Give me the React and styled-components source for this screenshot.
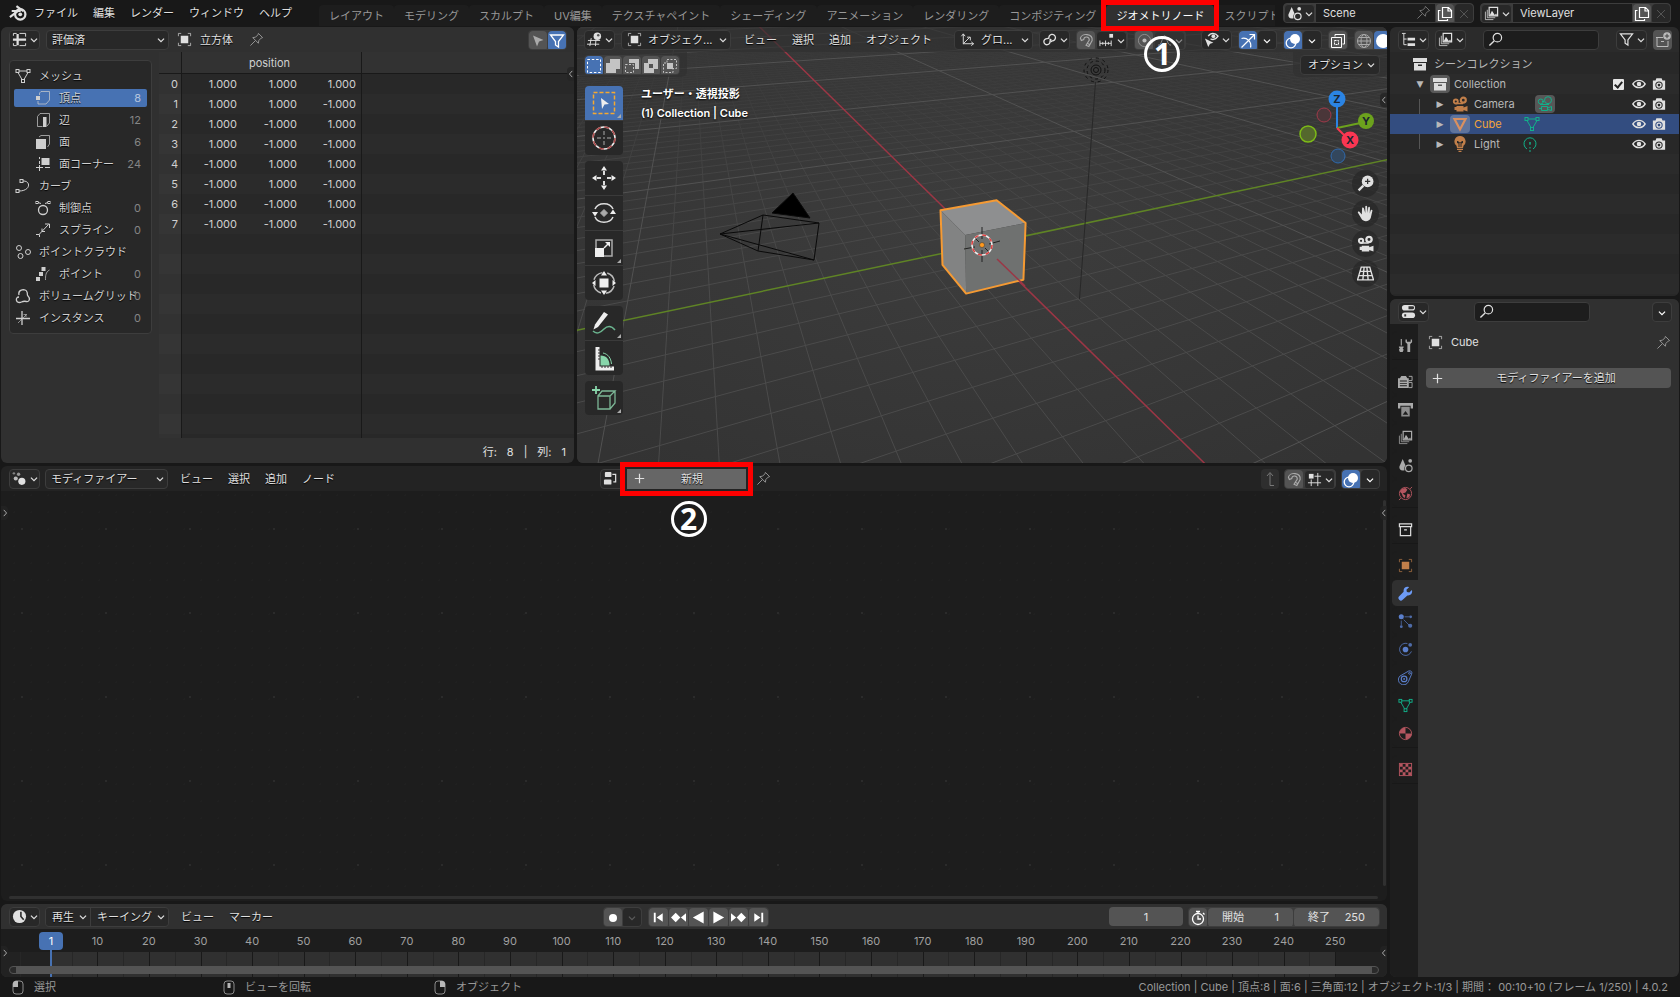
import { useState } from "react";
import styled, { createGlobalStyle, css } from "styled-components";

/* ---------- icons, all drawn on a 16 x 16 grid ---------- */

const square = (x, y, s = 3) => <rect x={x} y={y} width={s} height={s} />;

const icons = {
  blender: (
    <>
      <circle cx="10" cy="9.2" r="4.6" strokeWidth="2" />
      <circle cx="10" cy="9.2" r="1.7" fill="currentColor" stroke="none" />
      <path d="M0.8 11.6 8.6 5.6M2.4 6.2h8M6.6 1.8l6.2 4.6" strokeWidth="1.9" />
    </>
  ),
  chevron: <path d="M4.5 6.5 8 10l3.5-3.5" strokeWidth="1.4" />,
  left: <path d="M10 3 5.500 8l4.500 5" strokeWidth="1.5" />,
  right: <path d="M6 3l4.500 5L6 13" strokeWidth="1.5" />,
  sheet: (
    <>
      <path d="M1.5 4V1.5H5M8 1.5h6.5V5M1.5 12v2.5H5M8 14.5h6.5V12" strokeWidth="1" />
      <path d="M1 8h14M6 2v12" strokeWidth="2.4" />
    </>
  ),
  object: (
    <>
      <path d="M1.5 4.5v-3h3M11.5 1.5h3v3M1.5 11.5v3h3M11.5 14.5h3v-3" opacity=".7" />
      <rect x="4" y="4" width="8" height="8" fill="currentColor" stroke="none" />
    </>
  ),
  pin: <path d="M10 1.5 14.5 6l-1.5.5-2.5 2.5-.5 3L4 6l3-.5L9.5 3zM6.8 9.2 1.5 14.5" />,
  cursorArrow: <path d="M3 2.5 13.5 7 9 8.5 7 13.5z" fill="currentColor" stroke="none" />,
  funnel: <path d="M1.5 2h13L9.5 8.5v5.5l-3-2V8.5z" strokeWidth="1.3" />,
  mesh: (
    <>
      {square(1, 1.5)}
      {square(12, 1.5)}
      {square(6.5, 11.5)}
      <path d="M4 3h8M3 4.5l4 7M13 4.5l-4 7" />
    </>
  ),
  vertex: (
    <>
      <path d="M4.5 5V3L6 1.5h8.5V10l-3.5 4H3v-3" opacity=".7" />
      <rect x="1" y="6" width="4" height="4" fill="currentColor" stroke="none" />
    </>
  ),
  edge: (
    <>
      <path d="M2.5 14.5h5M2.5 14.5V4.5L5 1.5h9.5V11L12 14" opacity=".7" />
      <rect x="8" y="5" width="3.5" height="10" fill="currentColor" stroke="none" />
    </>
  ),
  face: (
    <>
      <path d="M4 3 6 1.5h8.5V10L12.5 13" opacity=".7" />
      <rect x="1" y="5" width="10" height="10" fill="currentColor" stroke="none" />
    </>
  ),
  corner: (
    <>
      <path d="M6.5 2h8v7h-8z" fill="currentColor" stroke="none" />
      <path d="M4.5 1v2M4.5 5v3M4.5 9v6M1 11.5h7M10 11.5h5" />
    </>
  ),
  curve: (
    <>
      {square(5, 1.5)}
      {square(1, 11.5)}
      <path d="M8 3c8-.5 8 10-4 10" />
    </>
  ),
  control: (
    <>
      <circle cx="8" cy="10" r="4.5" strokeWidth="1.3" />
      <path d="M3 2.5 6 3.500M13 2.500 10 3.500" />
      {square(1, 1.5, 2)}
      {square(13, 1.5, 2)}
    </>
  ),
  spline: <path d="M1 12.5h3.5V15M4.5 12l9-9.500M10 2h4.500v4M7 6.500v3h3" />,
  cloud: (
    <>
      <circle cx="4" cy="4" r="2.5" />
      <circle cx="5.5" cy="12" r="2.5" />
      <circle cx="13" cy="8" r="2.5" />
    </>
  ),
  points: (
    <>
      <path d="M14.5 4c-4 2-4 6-4 10" opacity=".7" />
      <path d="M1 11h4v4H1zM4 6h4v4H4zM6.5 1h4v4h-4z" fill="currentColor" stroke="none" />
    </>
  ),
  volume: <path d="M4 7C2.5 1.5 11 0 12 4c1 2-.5 2.5 1 4 2.5 2.5 1.5 6-1.5 5.5-2-.5-3-.5-5 .5-2 1-4.5.5-5-1.5S2 9 4 9" strokeWidth="1.3" />,
  instance: (
    <>
      <path d="M7 1v14M1 8.500h14" strokeWidth="1.300" />
      <path d="M3 13l9-9M11 7V4.500H8.500" opacity=".6" />
    </>
  ),
  nodes: (
    <>
      <circle cx="10.5" cy="11" r="3.8" fill="currentColor" stroke="none" />
      <circle cx="4" cy="8" r="2.2" fill="currentColor" stroke="none" opacity=".8" />
      <circle cx="7" cy="3.5" r="1.8" fill="currentColor" stroke="none" opacity=".6" />
      <circle cx="2" cy="2.5" r="1.3" fill="currentColor" stroke="none" opacity=".5" />
    </>
  ),
  view3d: (
    <>
      <path d="M4.5 6.5 3 15M9.5 8.5 9 15M1 9h13M0 13h13" />
      <circle cx="11" cy="4.5" r="4" fill="currentColor" stroke="none" />
      <circle cx="12" cy="3.5" r="1.3" fill="#555" stroke="none" />
    </>
  ),
  axes: <path d="M3.5 13V2M1.5 4.500 3.500 2l2 2.500M3.500 12.500h11M12 10.500l2.500 2-2.500 2M4 12l6.500-6.500M7.500 5.500H11V9" />,
  link: (
    <>
      <path d="M8.5 9.5a3.3 3.3 0 1 1-3-2.5l2-.5" strokeWidth="1.4" />
      <path d="M7.5 7a3.5 3.5 0 1 1 3.5 2.5l-2 1" strokeWidth="1.4" />
      <circle cx="9" cy="8.5" r="1.2" fill="currentColor" stroke="none" />
    </>
  ),
  magnet: <path d="M2.500 8 1.500 5.500C3-.5 15 .5 14 8l-3.500 6.500-3-1.500L11 7.500C11 3.500 5.500 3 5 7zM8.800 11l3 1.500" strokeWidth="1.200" />,
  snapInc: (
    <>
      <path d="M1 8v6M4 9.5v3M7 8v6M10 9.5v3M13 8v6M1 11h12" />
      <rect x="11" y="1" width="4" height="4" fill="currentColor" stroke="none" />
    </>
  ),
  snapGrid: (
    <>
      <path d="M4.5 8v7M11.5 1v14M8 4.5h7M1 11.5h14" />
      <rect x="2" y="2" width="5" height="5" fill="currentColor" stroke="none" />
    </>
  ),
  proportional: (
    <>
      <circle cx="8" cy="8" r="6.5" opacity=".6" />
      <circle cx="8" cy="8" r="2.2" fill="currentColor" stroke="none" />
    </>
  ),
  falloff: <path d="M1 13c5 0 4-10 7-10s2 10 7 10" />,
  visibility: (
    <>
      <path d="M1 7 10 11.500 6.500 12.500 4.500 16z" fill="currentColor" stroke="none" />
      <path d="M4.500 4.500C7 .5 12 .5 15 4.500c-2.500 3.500-5.500 4-8 2.800" strokeWidth="1.400" />
      <circle cx="10" cy="4.500" r="2" fill="currentColor" stroke="none" />
    </>
  ),
  gizmo: <path d="M1.5 5.5C7 4 12 9 10.5 14.5M1.5 14.5 14 2M9.5 1.5h5v5" strokeWidth="1.2" />,
  overlay: (
    <>
      <circle cx="10" cy="6" r="5" fill="currentColor" stroke="none" />
      <circle cx="6" cy="10" r="4.8" strokeWidth="1.3" />
    </>
  ),
  xray: (
    <>
      <path d="M5 3.5V1.5h9.5v9.5h-2M1.5 4.5h10v10h-10z" />
      <path d="M4.5 7.5h4v4h-4z" strokeDasharray="2 1" />
    </>
  ),
  globe: (
    <>
      <circle cx="8" cy="8" r="6.5" />
      <ellipse cx="8" cy="8" rx="3" ry="6.5" />
      <path d="M1.5 8h13M3 4.5h10M3 11.5h10" />
    </>
  ),
  solid: <circle cx="8" cy="8" r="7" fill="currentColor" stroke="none" />,
  selectSet: <rect x="1.5" y="1.5" width="13" height="13" strokeDasharray="2.5 1.8" />,
  selectExtend: <path d="M5 1h10v10h-4v4H1V5h4z" fill="currentColor" stroke="none" />,
  selectSubtract: (
    <>
      <path d="M5 1h10v10h-4V5H5z" fill="currentColor" stroke="none" />
      <path d="M1.5 6.5h8v8h-8z" strokeDasharray="2 1.5" />
    </>
  ),
  selectInvert: <path fillRule="evenodd" d="M5 1h10v10h-4v4H1V5h4zM6 6v4h4V6z" fill="currentColor" stroke="none" />,
  selectIntersect: (
    <>
      <path d="M5 1.5h9.5v9H11V14.5H1.5V5H5z" strokeDasharray="2 1.5" />
      <rect x="5" y="5" width="6" height="6" fill="currentColor" stroke="none" />
    </>
  ),
  scene: (
    <>
      <path d="M5 1 8 8c-1 1-1.5 3-1 5-4 1-6-1-5.5-4z" fill="currentColor" stroke="none" />
      <circle cx="13" cy="3" r="2" fill="currentColor" stroke="none" />
      <circle cx="11.5" cy="11" r="3.5" strokeWidth="1.3" />
    </>
  ),
  viewLayer: (
    <>
      <path d="M5.5 1.5h9v9h-9z" strokeWidth="1.3" />
      <path d="M6 10l2.5-5 3 4.5L13 8l1 2z" fill="currentColor" stroke="none" />
      <path d="M3.5 4v8.5H12M1.5 6v8.5H10" opacity=".8" />
    </>
  ),
  copy: <path d="M5.500 1.500h6l3 3v7h-9zM11 2v3h3M3.500 4.500h-2v10h9V13" strokeWidth="1.200" />,
  close: <path d="m3.500 3.500 9 9M12.500 3.500l-9 9" />,
  outliner: (
    <>
      <path d="M1 1.5h4M3 2v11.5h3M3 7.5h3" />
      <path d="M7 6h8v3H7zM7 12h8v3H7z" fill="currentColor" stroke="none" />
    </>
  ),
  search: (
    <>
      <circle cx="10" cy="6" r="4.5" strokeWidth="1.3" />
      <path d="M6.5 9.5 1.5 14.5" strokeWidth="1.5" />
    </>
  ),
  newCollection: (
    <>
      <path d="M8 5.5H1M2 6v8.5h11V9M6 9.5h3" />
      <circle cx="12" cy="4" r="3.8" fill="currentColor" stroke="none" />
      <path d="M12 1.8v4.4M9.8 4h4.4" stroke="#444" />
    </>
  ),
  collection: (
    <>
      <path d="M1 2h14v4H1z" fill="currentColor" stroke="none" />
      <path fillRule="evenodd" d="M2 7h12v7.5H2zM6 8.5v1.5h4V8.5z" fill="currentColor" stroke="none" />
    </>
  ),
  collectionLine: <path d="M1.5 2h13v3h-13zM2.5 5v9.5h11V5M6.5 8.5h3" strokeWidth="1.3" />,
  eye: (
    <>
      <path d="M1 8c3.5-5.5 10.5-5.5 14 0-3.5 5.5-10.5 5.5-14 0z" strokeWidth="1.6" />
      <circle cx="8" cy="8" r="2.6" fill="currentColor" stroke="none" />
    </>
  ),
  render: (
    <>
      <path fillRule="evenodd" d="M1 4h3l1-2.5h6L12 4h3v10.5H1zM8 5a4.2 4.2 0 1 0 0 8.4A4.2 4.2 0 0 0 8 5z" fill="currentColor" stroke="none" />
      <circle cx="8" cy="9.2" r="2.3" strokeWidth="1.5" />
    </>
  ),
  camera: (
    <>
      <circle cx="3.800" cy="5.500" r="2" strokeWidth="1.900" />
      <circle cx="11.300" cy="4.200" r="2.500" strokeWidth="2.200" />
      <path d="M4 7.500h7" strokeWidth="1.500" />
      <path d="M4.500 10h7v1.500l4-1.500v5.500l-4-1.500v1.500h-7v-1.500h-2v-3h2z" fill="currentColor" stroke="none" />
    </>
  ),
  cameraData: (
    <>
      <circle cx="3.8" cy="5.5" r="2.5" />
      <circle cx="11" cy="4.2" r="3.5" />
      <path d="M3 8.5h9M4.5 10.5h6v4h-6zM10.5 12l4-1.5v4l-4-1M4.5 12.5H2M5 5.5h2" />
    </>
  ),
  triangle: <path d="M2.5 3h11L8 13.5z" strokeWidth="2.2" />,
  bulb: (
    <>
      <path fillRule="evenodd" d="M8 0a5.500 5.500 0 0 1 3.500 9.800L11 12H5l-.5-2.200A5.500 5.500 0 0 1 8 0zM5 5v2l1.500.5V11h1V6.500h1V11h1V7.500L11 7V5H9.500v1h-3V5z" fill="currentColor" stroke="none" />
      <path d="M5 13.300h6M6.500 15.300h3" strokeWidth="1.200" />
    </>
  ),
  lightData: (
    <>
      <path d="M5 13a6 6 0 1 1 6 0" />
      <path d="M8 8v1M8 11v1.5M8 14v2" />
      <circle cx="8" cy="7" r="1" fill="currentColor" stroke="none" />
    </>
  ),
  properties: (
    <>
      <rect x="1" y="1" width="14" height="6" rx="3" fill="currentColor" stroke="none" />
      <rect x="1" y="9" width="14" height="6" rx="3" fill="currentColor" stroke="none" />
      <path d="M8 2.500h4.500a1.500 1.500 0 0 1 0 3H8zM3.500 10.800h2v2.400h-2z" fill="#333" stroke="none" />
    </>
  ),
  tool: (
    <>
      <path d="M3.5 1v7" strokeWidth="1.2" />
      <path d="M1 9h5v1L5 11l1 1.5L5 15H2l-1-2.5L2 11l-1-1z" fill="currentColor" stroke="none" />
      <path d="M8 1.5v3l2 2V15h3V6.5l2-2v-3h-1.5V4h-4V1.5z" fill="currentColor" stroke="none" />
    </>
  ),
  renderProps: (
    <>
      <path fillRule="evenodd" d="M0 4.500h2L3.500 2h5L10 4.500h1.500V15H0zM2 7v1h7.500V7zM2 9.500v1h7.500v-1zM2 12v1h7.500v-1z" fill="currentColor" stroke="none" />
      <path d="M11.500 2.500h3.500v4.500h-3.500M11.500 9H15v5.500h-3.500" />
    </>
  ),
  output: (
    <>
      <path d="M0 1h16v6h-2.500V4h-11v3H0z" fill="currentColor" stroke="none" />
      <path fillRule="evenodd" d="M3.500 5h9v10.500h-9zM5 13.500h6L8 9.500z" fill="currentColor" stroke="none" opacity=".8" />
    </>
  ),
  world: (
    <>
      <circle cx="8" cy="8" r="6.5" />
      <path d="M4 3l4-1 2 2-2 3-3 1 3 2-1 3-2-2-1-3-2-2zM10 8l3 1-1 3-3 1z" fill="currentColor" stroke="none" />
      <path d="m13 3 2-2M1 15l2-2" />
    </>
  ),
  wrench: <path d="M14.8 4.2 12 7 9.5 6.5 9 4l2.800-2.800C8.500.2 5.500 2 6 6L1.300 11a2.500 2.500 0 0 0 3.700 3.700L10 10c4 .5 5.800-2.500 4.800-5.800z" fill="currentColor" stroke="none" />,
  particles: (
    <>
      <circle cx="3.5" cy="3" r="2.7" fill="currentColor" stroke="none" />
      <circle cx="13.5" cy="3" r="1.5" fill="currentColor" stroke="none" opacity=".8" />
      <circle cx="3.5" cy="13.5" r="1.5" fill="currentColor" stroke="none" opacity=".8" />
      <circle cx="13" cy="12.5" r="2.2" fill="currentColor" stroke="none" opacity=".8" />
      <path d="M7 3h5M3.5 7v5M6 6l6 6" opacity=".7" />
    </>
  ),
  physics: (
    <>
      <circle cx="8" cy="8" r="3" fill="currentColor" stroke="none" />
      <circle cx="13" cy="3" r="2" fill="currentColor" stroke="none" opacity=".8" />
      <path d="M10 1.6A6.5 6.5 0 1 0 14.3 10" opacity=".8" />
    </>
  ),
  constraints: (
    <>
      <path d="M2 6.5 11.5 1c2.500-.5 4 1 3 3.500L11 12.500A5.500 5.500 0 1 1 2 6.500z" />
      <circle cx="6.5" cy="9.5" r="3" strokeWidth="1.3" />
      <circle cx="6.5" cy="9.5" r="1" fill="currentColor" stroke="none" />
      <circle cx="12.3" cy="3.5" r="1" />
    </>
  ),
  material: (
    <>
      <circle cx="8" cy="8" r="6.5" />
      <path d="M8 8V1.5A6.5 6.5 0 0 0 1.5 8zM8 8v6.5A6.5 6.5 0 0 0 14.5 8z" fill="currentColor" stroke="none" />
    </>
  ),
  texture: (
    <>
      <rect x="1.5" y="1.5" width="13" height="13" />
      <path
        d="M2 2h3v3H2zM8 2h3v3H8zM5 5h3v3H5zM11 5h3v3h-3zM2 8h3v3H2zM8 8h3v3H8zM5 11h3v3H5zM11 11h3v3h-3z"
        fill="currentColor"
        stroke="none"
      />
    </>
  ),
  plus: <path d="M8 3v10M3 8h10" strokeWidth="1.3" />,
  nodeTree: (
    <>
      <rect x="2" y="1" width="7" height="5.500" rx="1" fill="currentColor" stroke="none" />
      <rect x="1" y="9" width="8" height="5.500" rx="1" fill="currentColor" stroke="none" />
      <path d="M10 3.5h3.5v8H11" strokeWidth="1.3" />
    </>
  ),
  parent: <path d="M5 5 8 1.500 11 5M8 2v12.500h4" />,
  clock: (
    <>
      <circle cx="8" cy="8" r="7" fill="currentColor" stroke="none" />
      <path d="M9.5 3v5l3 3.500" stroke="#2a2a2a" strokeWidth="1.700" />
    </>
  ),
  record: <circle cx="8" cy="8" r="4" fill="currentColor" stroke="none" />,
  jumpStart: <path d="M3 3h2v10H3zM12.5 3.5v9L6 8z" fill="currentColor" stroke="none" />,
  keyPrev: <path d="M5 3 10 8 5 13 0 8zM16 3.500v9L10.500 8z" fill="currentColor" stroke="none" />,
  playBack: <path d="M13.500 1.500v13L2 8z" fill="currentColor" stroke="none" />,
  play: <path d="M2.500 1.500v13L14 8z" fill="currentColor" stroke="none" />,
  keyNext: <path d="M11 3 16 8l-5 5-5-5zM0 3.500v9L5.500 8z" fill="currentColor" stroke="none" />,
  jumpEnd: <path d="M11 3h2v10h-2zM3.5 3.5v9L10 8z" fill="currentColor" stroke="none" />,
  stopwatch: (
    <>
      <circle cx="8" cy="9" r="5.5" strokeWidth="1.3" />
      <path d="M8 5.5V9h3M6 1.5h4M8 1.5v2M13 3l1.500 1.500" strokeWidth="1.300" />
    </>
  ),
  zoom: (
    <>
      <circle cx="10" cy="6" r="5.5" fill="currentColor" stroke="none" />
      <path d="M6 10l-4.5 4.5" strokeWidth="2.2" />
      <path d="M10 3.5v5M7.5 6h5" stroke="#333" strokeWidth="1.2" />
    </>
  ),
  hand: (
    <path
      d="M4.500 9 2.500 6.500C1.500 5.500.2 6.300 1 7.500l3.500 6C6 16 12 16 13 12l1.500-6.500c.2-1.200-1.300-1.500-1.700-.3L12 8l.2-5.500c0-1.200-1.600-1.200-1.700 0L10 7.500 9.500 1.500c-.1-1.200-1.700-1.200-1.700 0V7.500L6.500 3C6 1.800 4.600 2.200 4.800 3.400z"
      fill="currentColor"
      stroke="none"
    />
  ),
  persp: <path d="M4 2h8l3.5 12H.5zM3 6h10.2M1.8 10h12.500M6.700 2 5.500 14M9.300 2l1.200 12" strokeWidth="1.300" />,
};

const Icon = ({ name, size = 16, color }) => (
  <IconSvg width={size} height={size} viewBox="0 0 16 16" fill="none" stroke="currentColor" color={color} aria-hidden="true">
    {icons[name]}
  </IconSvg>
);

const Mouse = ({ part }) => (
  <svg width="12" height="15" viewBox="0 0 12 15" fill="none" stroke="#8c8c8c" aria-hidden="true">
    <rect x="1" y="1" width="10" height="13" rx="3" />
    {part === "left" && <path d="M1 7V3l2-2h3v6z" fill="#b8b8b8" stroke="none" />}
    {part === "middle" && <rect x="4.5" y="3" width="3" height="5" fill="#b8b8b8" stroke="none" />}
    {part === "right" && <path d="M6 1h3l2 2v4H6z" fill="#b8b8b8" stroke="none" />}
  </svg>
);

/* ---------- large tool icons, 26 x 26 ---------- */

const tools = [
  [
    {
      name: "ボックス選択",
      corner: true,
      art: (
        <>
          <rect x="2.5" y="2.5" width="21" height="21" stroke="#f5a930" strokeWidth="1.5" strokeDasharray="4 2" />
          <path d="m10 8 8 6-4.5.5L11 19z" fill="#eee" />
        </>
      ),
    },
    {
      name: "カーソル",
      art: (
        <>
          <circle cx="13" cy="13" r="11" stroke="#eee" strokeWidth="1.5" />
          <circle cx="13" cy="13" r="11" stroke="#a94848" strokeWidth="1.5" strokeDasharray="5 3.64" />
          <path d="M13 6v4M13 16v4M6 13h4M16 13h4M12 13h2" stroke="#aaa" />
        </>
      ),
    },
  ],
  [
    {
      name: "移動",
      art: (
        <>
          <path d="m13 1 3 4.5h-6zM13 25l3-4.5h-6zM1 13l4.5-3v6zM25 13l-4.5-3v6z" fill="#eee" />
          <path d="M13 6v4M13 16v4M6 13h4M16 13h4" stroke="#ddd" strokeWidth="2" />
        </>
      ),
    },
    {
      name: "回転",
      art: (
        <>
          <path d="M4 9C7 2 19 2 22 9M22 17c-3 7-15 7-18 0" stroke="#ddd" strokeWidth="1.5" />
          <path d="M13 9.5 16.5 13 13 16.5 9.5 13z" fill="#aaa" stroke="#aaa" />
          <path d="M1 12h6l-3 4.5zM19 14h6l-3-4.5z" fill="#eee" />
        </>
      ),
    },
    {
      name: "スケール",
      corner: true,
      art: (
        <>
          <path d="M5 13V5h16v16h-8" stroke="#aaa" strokeWidth="1.5" />
          <rect x="4" y="13" width="9" height="9" fill="#eee" />
          <path d="m13 13 4-4" stroke="#eee" strokeWidth="1.5" />
          <path d="M14 7h5v5z" fill="#eee" />
        </>
      ),
    },
    {
      name: "トランスフォーム",
      art: (
        <>
          <circle cx="13" cy="13" r="10.5" stroke="#bbb" strokeWidth="1.5" strokeDasharray="11.5 5" strokeDashoffset="-3" />
          <rect x="8.5" y="8.5" width="9" height="9" fill="#eee" />
          <path d="m13 1 3 4.5h-6zM13 25l3-4.5h-6zM1 13l3.5-3v6zM25 13l-3.5-3v6z" fill="#eee" />
        </>
      ),
    },
  ],
  [
    {
      name: "アノテート",
      corner: true,
      art: (
        <>
          <path d="m13 2 4 2.500L7 17l-4.500 2.500L4 14.500z" fill="#eee" />
          <path d="M2 21c4 4 8 1 11-2s7-4 11 1" stroke="#6ab38e" strokeWidth="1.500" />
        </>
      ),
    },
    {
      name: "メジャー",
      art: (
        <>
          <path d="M6.500 2v21.500H23" stroke="#eee" strokeWidth="4" />
          <path d="M7 5h2M7 8h2M7 11h2M7 14h2M11 23v-2M14 23v-2M17 23v-2M20 23v-2" stroke="#333" />
          <path d="M9.500 20.500V10.500c6 0 9 4 9 10z" fill="#88d6ab" />
          <path d="M12 8c5 1 8 5 8.500 11" stroke="#88d6ab" />
        </>
      ),
    },
  ],
  [
    {
      name: "立方体を追加",
      corner: true,
      art: (
        <>
          <path d="M5 1v8M1 5h8" stroke="#88d6ab" strokeWidth="1.8" />
          <path d="M7 11h12v13H7zM7 11l4-5h13l-5 5M24 6v12l-5 6" stroke="#7cb796" strokeWidth="1.3" />
        </>
      ),
    },
  ],
];

/* ---------- 3D scene ---------- */

const SCENE_W = 810;
const SCENE_H = 436;
const FOCAL = 562;
const DISTANCE = 18;
const RIGHT = [0.42, 0.908, 0];
const UP = [-0.412, 0.191, 0.891];
const BACK = [0.809, -0.374, 0.454];

const dot = (a, b) => a[0] * b[0] + a[1] * b[1] + a[2] * b[2];

const project = (p) => {
  const depth = DISTANCE - dot(p, BACK);
  return [
    (SCENE_W / 2 + (FOCAL * dot(p, RIGHT)) / depth).toFixed(1),
    (SCENE_H / 2 - (FOCAL * dot(p, UP)) / depth).toFixed(1),
  ];
};

// ground lines are cut where they would pass behind the viewer
const groundLine = (axis, n, reach) => {
  const at = (t) => (axis === "x" ? [t, n, 0] : [n, t, 0]);
  const slope = axis === "x" ? BACK[0] : BACK[1];
  const offset = axis === "x" ? BACK[1] * n : BACK[0] * n;
  const limit = (DISTANCE - 2 - offset) / slope;
  const from = slope > 0 ? -reach : Math.max(-reach, limit);
  const to = slope > 0 ? Math.min(reach, limit) : reach;
  if (from >= to) return "";
  return `M${project(at(from)).join(" ")}L${project(at(to)).join(" ")}`;
};

const steps = Array.from({ length: 161 }, (_, i) => i - 80);
const lines = (list, reach) =>
  list.map((n) => groundLine("x", n, reach) + groundLine("y", n, reach)).join("");

const minorGrid = lines(steps.filter((n) => n % 10 !== 0), 90);
const majorGrid = lines(steps.filter((n) => n % 10 === 0 && n !== 0), 200);

const polygon = (...points) => points.map((p) => project(p).join(",")).join(" ");

const Scene = () => (
  <SceneSvg viewBox={`0 0 ${SCENE_W} ${SCENE_H}`} preserveAspectRatio="xMidYMid slice" aria-hidden="true">
    <defs>
      <radialGradient id="bg" cx="50%" cy="45%" r="70%">
        <stop offset="0" stopColor="#3d3d3d" />
        <stop offset="1" stopColor="#333333" />
      </radialGradient>
      <linearGradient id="fade" x1="0" y1="0" x2="0" y2="1">
        <stop offset="0" stopColor="#111" />
        <stop offset=".15" stopColor="#444" />
        <stop offset=".35" stopColor="#aaa" />
        <stop offset=".6" stopColor="#fff" />
      </linearGradient>
      <mask id="far">
        <rect width={SCENE_W} height={SCENE_H} fill="url(#fade)" />
      </mask>
    </defs>
    <rect width={SCENE_W} height={SCENE_H} fill="url(#bg)" />
    <path d={minorGrid} stroke="#4b4b4b" mask="url(#far)" />
    <path d={majorGrid} stroke="#525252" />
    <path d={groundLine("x", 0, 200)} stroke="#9c3645" strokeWidth="1.5" />
    <path d={groundLine("y", 0, 200)} stroke="#5f8425" strokeWidth="1.5" />

    {/* camera */}
    <g stroke="#0a0a0a" fill="none">
      <path d="M143 207 186 188 242 196 237 233 181 224zM186 188 181 224M143 207 242 196M143 207 237 233" />
      <path d="M216 166 195 186 233 191z" fill="#000" />
    </g>

    {/* lamp */}
    <g stroke="#111" fill="none">
      <circle cx="519" cy="43" r="2.5" />
      <circle cx="519" cy="43" r="5" />
      <circle cx="519" cy="43" r="9" strokeDasharray="3 3" />
      <circle cx="519" cy="43" r="12" strokeDasharray="3 4" />
      <path d="M518.5 55 502.5 272" stroke="#282828" />
    </g>

    {/* cube */}
    <polygon points={polygon([1, -1, 1], [1, 1, 1], [-1, 1, 1], [-1, -1, 1])} fill="#8e8f90" />
    <polygon points={polygon([1, -1, 1], [-1, -1, 1], [-1, -1, -1], [1, -1, -1])} fill="#828383" />
    <polygon points={polygon([1, -1, 1], [1, 1, 1], [1, 1, -1], [1, -1, -1])} fill="#6f7170" />
    <polygon
      points={polygon([-1, -1, 1], [-1, 1, 1], [1, 1, 1], [1, 1, -1], [1, -1, -1], [-1, -1, -1])}
      fill="none"
      stroke="#f59a33"
      strokeWidth="2"
      strokeLinejoin="round"
    />
    <path d="M420 232 448 259" stroke="#9c3645" strokeWidth="1.5" />

    {/* 3D cursor */}
    <g fill="none">
      <path d="M405 200v12M405 223v12M387 222l11-2M412 217l11-3M397 210l5 5M408 221l4 4" stroke="#222" />
      <circle cx="405" cy="218" r="10" stroke="#eee" strokeWidth="1.5" />
      <circle cx="405" cy="218" r="10" stroke="#e04040" strokeWidth="1.5" strokeDasharray="4 3.85" />
      <circle cx="405" cy="218" r="2.5" fill="#ff9a1f" stroke="#333" strokeWidth=".5" />
    </g>
  </SceneSvg>
);

const AxisGizmo = () => (
  <svg width="82" height="77" viewBox="0 0 82 77" role="img" aria-label="XYZ">
    <path d="M40 38V9" stroke="#2b84e3" strokeWidth="2" />
    <path d="M40 38l28-6" stroke="#6ca21d" strokeWidth="2" />
    <path d="M40 38l13 13" stroke="#fa3652" strokeWidth="2" />
    <circle cx="27" cy="25" r="7" fill="#4a3639" stroke="#a03a4a" />
    <circle cx="11" cy="44" r="8" fill="#54682d" stroke="#7dbb17" strokeWidth="1.5" />
    <circle cx="41" cy="66" r="7" fill="#33475d" stroke="#2f69ad" />
    <circle cx="40" cy="9" r="8.5" fill="#2b84e3" />
    <circle cx="69" cy="31" r="8" fill="#6ca21d" />
    <circle cx="53" cy="50" r="8.5" fill="#fa3652" />
    <AxisText x="40" y="13">Z</AxisText>
    <AxisText x="69" y="35">Y</AxisText>
    <AxisText x="53" y="54">X</AxisText>
  </svg>
);

/* ---------- small shared parts ---------- */

const IconMenu = ({ icon, label, dim }) => (
  <MenuButton aria-label={label} $dim={dim}>
    <Icon name={icon} size={15} />
    <Icon name="chevron" size={14} />
  </MenuButton>
);

const DropDown = ({ label, icon, value, width }) => (
  <SelectBox $width={width}>
    {icon && <Icon name={icon} size={15} />}
    <Select aria-label={label} defaultValue={value}>
      <option>{value}</option>
    </Select>
    <Icon name="chevron" size={14} />
  </SelectBox>
);

const SearchField = ({ start }) => (
  <SearchBox $start={start}>
    <Icon name="search" size={15} />
    <TextInput type="search" aria-label="検索" />
  </SearchBox>
);

const Menus = ({ items }) => (
  <MenuRow>
    {items.map((item) => (
      <TextButton key={item}>{item}</TextButton>
    ))}
  </MenuRow>
);

const Callout = ({ number }) => (
  <CalloutFrame>
    <CalloutNumber>{number}</CalloutNumber>
  </CalloutFrame>
);

const DataBlock = ({ icon, label, value, pinned }) => (
  <Joined>
    <IconMenu icon={icon} label={label} />
    <NameBox>
      <TextInput aria-label={label} defaultValue={value} />
      {pinned && <Icon name="pin" size={15} color="#777" />}
    </NameBox>
    <Toggle $tone="raised" aria-label="新規">
      <Icon name="copy" />
    </Toggle>
    <Toggle aria-label="削除" disabled>
      <Icon name="close" size={14} />
    </Toggle>
  </Joined>
);

/* ---------- areas ---------- */

const workspaces = [
  "レイアウト",
  "モデリング",
  "スカルプト",
  "UV編集",
  "テクスチャペイント",
  "シェーディング",
  "アニメーション",
  "レンダリング",
  "コンポジティング",
  "ジオメトリノード",
  "スクリプト作成",
];

const TopBar = () => {
  const [active, setActive] = useState("ジオメトリノード");
  return (
    <Top>
      <Icon name="blender" size={18} />
      <Menus items={["ファイル", "編集", "レンダー", "ウィンドウ", "ヘルプ"]} />
      <Tabs>
        {workspaces.map((name) => (
          <Tab key={name} $active={name === active} onClick={() => setActive(name)}>
            {name}
            {name === "ジオメトリノード" && <Callout number="1" />}
          </Tab>
        ))}
      </Tabs>
      <DataBlocks>
        <DataBlock icon="scene" label="シーン" value="Scene" pinned />
        <DataBlock icon="viewLayer" label="ビューレイヤー" value="ViewLayer" />
      </DataBlocks>
    </Top>
  );
};

const domains = [
  { icon: "mesh", name: "メッシュ" },
  { icon: "vertex", name: "頂点", count: 8, child: true },
  { icon: "edge", name: "辺", count: 12, child: true },
  { icon: "face", name: "面", count: 6, child: true },
  { icon: "corner", name: "面コーナー", count: 24, child: true },
  { icon: "curve", name: "カーブ" },
  { icon: "control", name: "制御点", count: 0, child: true },
  { icon: "spline", name: "スプライン", count: 0, child: true },
  { icon: "cloud", name: "ポイントクラウド" },
  { icon: "points", name: "ポイント", count: 0, child: true },
  { icon: "volume", name: "ボリュームグリッド", count: 0 },
  { icon: "instance", name: "インスタンス", count: 0 },
];

const positions = [
  [1, 1, 1],
  [1, 1, -1],
  [1, -1, 1],
  [1, -1, -1],
  [-1, 1, 1],
  [-1, 1, -1],
  [-1, -1, 1],
  [-1, -1, -1],
];

const Spreadsheet = () => {
  const [domain, setDomain] = useState("頂点");
  return (
    <Area>
      <Header>
        <IconMenu icon="sheet" label="スプレッドシート" />
        <DropDown label="オブジェクト評価状態" value="評価済" width={123} />
        <ObjectLabel>
          <Icon name="object" size={15} />
          立方体
          <Icon name="pin" size={15} color="#999" />
        </ObjectLabel>
        <Push />
        <Joined>
          <Toggle $tone="raised" aria-label="選択のみ">
            <Icon name="cursorArrow" color="#aaa" />
          </Toggle>
          <Toggle $tone="on" aria-label="フィルター">
            <Icon name="funnel" />
          </Toggle>
        </Joined>
      </Header>
      <SheetBody>
        <DomainPanel>
          {domains.map((d) => (
            <Domain key={d.name} $child={d.child} $active={d.name === domain} onClick={() => setDomain(d.name)}>
              <Icon name={d.icon} />
              <DomainName>{d.name}</DomainName>
              <Count $active={d.name === domain}>{d.count}</Count>
            </Domain>
          ))}
        </DomainPanel>
        <SheetMain>
          <TableBox>
            <Table>
              <colgroup>
                <col width="23" />
                <col width="60" />
                <col width="60" />
                <col width="60" />
                <col />
              </colgroup>
              <thead>
                <tr>
                  <th />
                  <th colSpan="3">position</th>
                  <th />
                </tr>
              </thead>
              <tbody>
                {Array.from({ length: 19 }, (_, row) => (
                  <tr key={row}>
                    <th>{positions[row] && row}</th>
                    {[0, 1, 2].map((axis) => (
                      <td key={axis}>{positions[row] && positions[row][axis].toFixed(3)}</td>
                    ))}
                    <td />
                  </tr>
                ))}
              </tbody>
            </Table>
          </TableBox>
          <SheetFooter>
            <span>行:</span>
            <span>8</span>
            <span>|</span>
            <span>列:</span>
            <span>1</span>
          </SheetFooter>
        </SheetMain>
      </SheetBody>
      <SideTab $side="right" $top={40} aria-label="サイドバー">
        <Icon name="left" size={10} />
      </SideTab>
    </Area>
  );
};

const Viewport = () => (
  <Area>
    <Scene />
    <ViewHeader>
      <HeaderGroup>
        <IconMenu icon="view3d" label="3Dビューポート" />
        <DropDown label="モード" icon="object" value="オブジェク..." width={110} />
        <Menus items={["ビュー", "選択", "追加", "オブジェクト"]} />
      </HeaderGroup>
      <HeaderGroup>
        <DropDown label="座標系" icon="axes" value="グロ..." width={79} />
        <IconMenu icon="link" label="ピボットポイント" />
        <Joined>
          <Toggle $tone="raised" aria-label="スナップ">
            <Icon name="magnet" size={15} color="#aaa" />
          </Toggle>
          <IconMenu icon="snapInc" label="スナップ先" />
        </Joined>
        <Joined>
          <Toggle $tone="raised" aria-label="プロポーショナル編集">
            <Icon name="proportional" size={15} color="#bbb" />
          </Toggle>
          <IconMenu icon="falloff" label="減衰" dim />
        </Joined>
      </HeaderGroup>
      <HeaderGroup>
        <IconMenu icon="visibility" label="可視性" />
        <Joined>
          <Toggle $tone="on" aria-label="ギズモ">
            <Icon name="gizmo" />
          </Toggle>
          <Toggle aria-label="ギズモ設定">
            <Icon name="chevron" size={14} />
          </Toggle>
        </Joined>
        <Joined>
          <Toggle $tone="on" aria-label="オーバーレイ">
            <Icon name="overlay" />
          </Toggle>
          <Toggle aria-label="オーバーレイ設定">
            <Icon name="chevron" size={14} />
          </Toggle>
        </Joined>
        <Joined>
          <Toggle $tone="raised" aria-label="透過表示">
            <Icon name="xray" />
          </Toggle>
        </Joined>
        <Joined>
          <Toggle $tone="raised" aria-label="ワイヤーフレーム">
            <Icon name="globe" color="#aaa" />
          </Toggle>
          <Toggle $tone="on" aria-label="ソリッド">
            <Icon name="solid" />
          </Toggle>
        </Joined>
      </HeaderGroup>
    </ViewHeader>
    <ToolSettings>
      <SettingsPatch>
        <Joined>
          {["selectSet", "selectExtend", "selectSubtract", "selectInvert", "selectIntersect"].map((name, i) => (
            <Toggle key={name} $tone={i === 0 ? "on" : "raised"} aria-label={name}>
              <Icon name={name} color={i === 0 ? undefined : "#c4c4c4"} />
            </Toggle>
          ))}
        </Joined>
      </SettingsPatch>
      <SettingsPatch>
        <OptionsButton>
          オプション
          <Icon name="chevron" size={14} />
        </OptionsButton>
      </SettingsPatch>
    </ToolSettings>
    <ViewBody>
      <ToolShelf>
        {tools.map((group, i) => (
          <ToolGroup key={i}>
            {group.map((tool, j) => (
              <ToolButton key={tool.name} $active={i === 0 && j === 0} $corner={tool.corner} aria-label={tool.name}>
                <svg width="26" height="26" viewBox="0 0 26 26" fill="none" aria-hidden="true">
                  {tool.art}
                </svg>
              </ToolButton>
            ))}
          </ToolGroup>
        ))}
      </ToolShelf>
      <ViewText>
        <span>ユーザー・透視投影</span>
        <span>(1) Collection | Cube</span>
      </ViewText>
      <Navigation>
        <AxisGizmo />
        {[
          ["zoom", "ズーム"],
          ["hand", "移動"],
          ["camera", "カメラビュー"],
          ["persp", "透視投影"],
        ].map(([icon, label]) => (
          <NavButton key={icon} aria-label={label}>
            <Icon name={icon} size={17} />
          </NavButton>
        ))}
      </Navigation>
    </ViewBody>
    <SideTab $side="right" $top={66} aria-label="サイドバー">
      <Icon name="left" size={10} />
    </SideTab>
  </Area>
);

const NodeEditor = () => (
  <Area $tone="node">
    <Header $tone="node">
      <HeaderSide>
        <IconMenu icon="nodes" label="ジオメトリノードエディター" />
        <DropDown label="ノードツリータイプ" value="モディファイアー" width={123} />
        <Menus items={["ビュー", "選択", "追加", "ノード"]} />
      </HeaderSide>
      <HeaderMiddle>
        <NewTree>
          <IconMenu icon="nodeTree" label="ノードツリー" />
          <NewButton>
            <Icon name="plus" size={15} />
            <span>新規</span>
            <Callout number="2" />
          </NewButton>
          <Icon name="pin" size={15} color="#999" />
        </NewTree>
      </HeaderMiddle>
      <HeaderSide $end>
        <Toggle $tone="faded" aria-label="親ノードツリー">
          <Icon name="parent" />
        </Toggle>
        <Joined>
          <Toggle $tone="raised" aria-label="スナップ">
            <Icon name="magnet" size={15} color="#aaa" />
          </Toggle>
          <IconMenu icon="snapGrid" label="スナップ先" />
        </Joined>
        <Joined>
          <Toggle $tone="on" aria-label="オーバーレイ">
            <Icon name="overlay" />
          </Toggle>
          <Toggle aria-label="オーバーレイ設定">
            <Icon name="chevron" size={14} />
          </Toggle>
        </Joined>
      </HeaderSide>
    </Header>
    <NodeCanvas>
      <VerticalBar />
      <HorizontalBar />
    </NodeCanvas>
    <SideTab $side="left" $top={40} aria-label="ツールバー">
      <Icon name="right" size={10} />
    </SideTab>
    <SideTab $side="right" $top={40} aria-label="サイドバー">
      <Icon name="left" size={10} />
    </SideTab>
  </Area>
);

const transport = [
  ["jumpStart", "先頭へ"],
  ["keyPrev", "前のキーフレーム"],
  ["playBack", "逆再生"],
  ["play", "再生"],
  ["keyNext", "次のキーフレーム"],
  ["jumpEnd", "末尾へ"],
];

const frames = Array.from({ length: 26 }, (_, i) => i * 10);

const Timeline = () => (
  <Area>
    <Header>
      <HeaderSide>
        <IconMenu icon="clock" label="タイムライン" />
        <Joined>
          <PopoverButton>
            再生
            <Icon name="chevron" size={14} />
          </PopoverButton>
          <PopoverButton>
            キーイング
            <Icon name="chevron" size={14} />
          </PopoverButton>
        </Joined>
        <Menus items={["ビュー", "マーカー"]} />
      </HeaderSide>
      <HeaderMiddle>
        <Joined>
          <Toggle $tone="raised" aria-label="自動キー挿入">
            <Icon name="record" />
          </Toggle>
          <Toggle aria-label="自動キー設定" disabled>
            <Icon name="chevron" size={14} />
          </Toggle>
        </Joined>
        <Joined>
          {transport.map(([icon, label]) => (
            <Toggle key={icon} $tone="raised" $wide aria-label={label}>
              <Icon name={icon} size={15} />
            </Toggle>
          ))}
        </Joined>
      </HeaderMiddle>
      <HeaderSide $end>
        <NumberBox $width={74} $center>
          <TextInput aria-label="現在のフレーム" defaultValue="1" />
        </NumberBox>
        <Joined>
          <Toggle $tone="raised" aria-label="プレビュー範囲">
            <Icon name="stopwatch" />
          </Toggle>
          <NumberBox $width={85} as="label">
            開始
            <TextInput defaultValue="1" />
          </NumberBox>
          <NumberBox $width={85} as="label">
            終了
            <TextInput defaultValue="250" />
          </NumberBox>
        </Joined>
      </HeaderSide>
    </Header>
    <Ruler>
      {frames.map((frame) => (
        <Tick key={frame}>
          <TickLabel>{frame > 0 && frame}</TickLabel>
          <TickTrack $first={frame === 0} $last={frame === 250} />
        </Tick>
      ))}
      <Playhead>
        <PlayheadLabel>1</PlayheadLabel>
      </Playhead>
      <RangeBar />
    </Ruler>
    <SideTab $side="left" $top={42} aria-label="チャンネル">
      <Icon name="right" size={10} />
    </SideTab>
    <SideTab $side="right" $top={42} aria-label="サイドバー">
      <Icon name="left" size={10} />
    </SideTab>
  </Area>
);

const outlinerObjects = [
  { name: "Camera", icon: "camera", data: "cameraData", boxed: "data" },
  { name: "Cube", icon: "triangle", data: "mesh", boxed: "icon", active: true },
  { name: "Light", icon: "bulb", data: "lightData" },
];

const RowToggles = () => (
  <>
    <RowButton aria-label="表示">
      <Icon name="eye" size={14} />
    </RowButton>
    <RowButton aria-label="レンダー">
      <Icon name="render" size={14} />
    </RowButton>
  </>
);

const Outliner = () => (
  <Area $tone="outliner">
    <Header $tone="outliner">
      <IconMenu icon="outliner" label="アウトライナー" />
      <IconMenu icon="viewLayer" label="表示モード" />
      <SearchField />
      <IconMenu icon="funnel" label="フィルター" />
      <Toggle $tone="raised" $wide aria-label="新規コレクション">
        <Icon name="newCollection" color="#bbb" />
      </Toggle>
    </Header>
    <Tree>
      <TreeRow $level={0}>
        <IconCell>
          <Icon name="collection" />
        </IconCell>
        <span>シーンコレクション</span>
      </TreeRow>
      <TreeRow $level={1}>
        <Arrow>▼</Arrow>
        <IconCell $boxed>
          <Icon name="collection" />
        </IconCell>
        <span>Collection</span>
        <Push />
        <Check type="checkbox" aria-label="Collection" defaultChecked />
        <RowToggles />
      </TreeRow>
      <Branch>
        {outlinerObjects.map((o) => (
          <TreeRow key={o.name} $level={2} $active={o.active}>
            <Arrow>▶</Arrow>
            <IconCell $boxed={o.boxed === "icon"}>
              <Icon name={o.icon} color={o.active ? "#d99060" : "#c17f4a"} />
            </IconCell>
            <ObjectName $active={o.active}>{o.name}</ObjectName>
            <IconCell $boxed={o.boxed === "data"}>
              <Icon name={o.data} color="#12b08a" />
            </IconCell>
            <Push />
            <RowToggles />
          </TreeRow>
        ))}
      </Branch>
    </Tree>
  </Area>
);

const propertyTabs = [
  [["tool", "ツール", "#aaaaaa"]],
  [
    ["renderProps", "レンダー", "#aaaaaa"],
    ["output", "出力", "#aaaaaa"],
    ["viewLayer", "ビューレイヤー", "#aaaaaa"],
    ["scene", "シーン", "#aaaaaa"],
    ["world", "ワールド", "#b4555f"],
  ],
  [["collectionLine", "コレクション", "#dddddd"]],
  [
    ["object", "オブジェクト", "#c17f4a"],
    ["wrench", "モディファイアー", "#6d9bf5"],
    ["particles", "パーティクル", "#5b7fcb"],
    ["physics", "物理演算", "#5b7fcb"],
    ["constraints", "コンストレイント", "#5b7fcb"],
    ["mesh", "データ", "#12b08a"],
    ["material", "マテリアル", "#b4555f"],
  ],
  [["texture", "テクスチャ", "#b4555f"]],
];

const Properties = () => {
  const [tab, setTab] = useState("wrench");
  return (
    <Area>
      <Header>
        <IconMenu icon="properties" label="プロパティ" />
        <SearchField start />
        <Joined>
          <Toggle aria-label="オプション">
            <Icon name="chevron" size={14} />
          </Toggle>
        </Joined>
      </Header>
      <PropertyBody>
        <PropertyTabs>
          {propertyTabs.map((group, i) => (
            <PropertyGroup key={i}>
              {group.map(([icon, label, color]) => (
                <PropertyTab key={icon} $active={tab === icon} aria-label={label} onClick={() => setTab(icon)}>
                  <Icon name={icon} size={15} color={color} />
                </PropertyTab>
              ))}
            </PropertyGroup>
          ))}
        </PropertyTabs>
        <PropertyPanel>
          <PropertyTitle>
            <Icon name="object" size={15} />
            Cube
            <Push />
            <Icon name="pin" size={15} color="#999" />
          </PropertyTitle>
          <AddModifier>
            <Icon name="plus" size={15} />
            <span>モディファイアーを追加</span>
          </AddModifier>
        </PropertyPanel>
      </PropertyBody>
    </Area>
  );
};

const App = () => (
  <Page>
    <GlobalStyle />
    <TopBar />
    <Workspace>
      <LeftSide>
        <UpperRow>
          <Spreadsheet />
          <Viewport />
        </UpperRow>
        <NodeEditor />
        <Timeline />
      </LeftSide>
      <RightSide>
        <Outliner />
        <Properties />
      </RightSide>
    </Workspace>
    <StatusBar>
      <Hint>
        <Mouse part="left" />
        選択
      </Hint>
      <Hint>
        <Mouse part="middle" />
        ビューを回転
      </Hint>
      <Hint>
        <Mouse part="right" />
        オブジェクト
      </Hint>
      <Stats>
        Collection | Cube | 頂点:8 | 面:6 | 三角面:12 | オブジェクト:1/3 | 期間： 00:10+10 (フレーム 1/250) | 4.0.2
      </Stats>
    </StatusBar>
  </Page>
);

/* ---------- styles ---------- */

const GlobalStyle = createGlobalStyle`
  * {
    box-sizing: border-box;
  }
  body {
    margin: 0;
    background: #181818;
  }
  body, button, input, select {
    font-family: Inter, "Noto Sans CJK JP", sans-serif;
    font-size: 11px;
    line-height: 16px;
    color: #e0e0e0;
  }
  button, input, select {
    margin: 0;
    padding: 0;
    border: 0;
    background: none;
  }
`;

const tones = {
  base: "#282828",
  raised: "#545454",
  faded: "#2e2e2e",
  on: "#4772b3",
};

const areaTones = {
  base: "#303030",
  node: "#1d1d1d",
  outliner: "#282828",
};

const headerTones = {
  base: "#303030",
  node: "#232323",
  outliner: "#2b2b2b",
};

const control = css`
  display: flex;
  align-items: center;
  flex: none;
  height: 20px;
  background: #282828;
  border: 1px solid #3d3d3d;
  border-radius: 4px;
`;

const IconSvg = styled.svg`
  flex: none;
`;

const Page = styled.div`
  display: flex;
  flex-direction: column;
  height: 100vh;
  overflow: hidden;
`;

const Top = styled.header`
  display: flex;
  align-items: center;
  flex: none;
  height: 27px;
  padding: 0 9px 2px 9px;
  text-shadow: 0 1px 1px #000;
`;

const MenuRow = styled.nav`
  display: flex;
  flex: none;
  gap: 1px;
`;

const TextButton = styled.button`
  padding: 0 7px;
  white-space: nowrap;
  text-shadow: 0 1px 1px #000;
`;

const Tabs = styled.nav`
  display: flex;
  flex: 1;
  align-self: stretch;
  min-width: 0;
  margin-left: 20px;
  padding-top: 5px;
  overflow-x: clip;
`;

const Tab = styled.button`
  position: relative;
  flex: none;
  padding: 0 10px;
  height: 21px;
  border-radius: 4px 4px 0 0;
  white-space: nowrap;
  background: ${(p) => (p.$active ? "#303030" : "#1d1d1d")};
  color: ${(p) => (p.$active ? "#ffffff" : "#989898")};
`;

const CalloutFrame = styled.span`
  position: absolute;
  inset: -5px;
  z-index: 5;
  border: 5px solid #fe0000;
  pointer-events: none;
`;

const CalloutNumber = styled.span`
  position: absolute;
  top: 100%;
  left: 50%;
  display: grid;
  place-items: center;
  width: 36px;
  height: 36px;
  margin: 10px 0 0 -16px;
  border: 3px solid #ffffff;
  border-radius: 50%;
  font: 700 30px/30px "Noto Sans", sans-serif;
  color: #ffffff;
  text-shadow: none;
`;

const DataBlocks = styled.div`
  display: flex;
  gap: 6px;
  margin-left: 8px;
`;

const Joined = styled.div`
  display: flex;
  flex: none;
  align-items: stretch;
  gap: 1px;
  height: 20px;
  border: 1px solid #3d3d3d;
  border-radius: 4px;
  background: #3d3d3d;
  overflow: hidden;

  > * {
    height: auto;
    border: 0;
    border-radius: 0;
  }
`;

const MenuButton = styled.button`
  ${control}
  padding: 0 0 0 2px;
  width: 31px;
  opacity: ${(p) => (p.$dim ? 0.5 : 1)};
`;

const Toggle = styled.button`
  display: grid;
  place-items: center;
  flex: none;
  width: ${(p) => (p.$wide ? 19 : 18)}px;
  height: 20px;
  border-radius: 4px;
  background: ${(p) => tones[p.$tone || "base"]};
  color: ${(p) => (p.$tone === "faded" ? "#777777" : "#ffffff")};

  &:disabled {
    color: #5c5c5c;
  }
`;

const NameBox = styled.div`
  display: flex;
  align-items: center;
  width: 119px;
  padding: 0 4px 0 7px;
  background: #1d1d1d;
`;

const TextInput = styled.input`
  flex: 1;
  width: 0;
  min-width: 0;
  outline: none;
`;

const SelectBox = styled.div`
  ${control}
  width: ${(p) => p.$width}px;
  padding: 0 0 0 5px;

  svg:first-child {
    margin-right: 6px;
  }

  svg:last-child {
    pointer-events: none;
  }
`;

const Select = styled.select`
  flex: 1;
  width: 0;
  appearance: none;
  outline: none;
  text-shadow: 0 1px 1px #000;
`;

const SearchBox = styled.label`
  ${control}
  flex: 0 1 116px;
  min-width: 0;
  margin: ${(p) => (p.$start ? "0 auto 0 39px" : "0 auto")};
  padding: 0 4px;
  background: #1d1d1d;
`;

const Push = styled.span`
  flex: 1;
`;

const Workspace = styled.main`
  display: grid;
  grid-template-columns: minmax(0, 1fr) 289px;
  gap: 3px;
  flex: 1;
  min-height: 0;
  padding: 0 1px;
`;

const LeftSide = styled.div`
  display: grid;
  grid-template-rows: minmax(0, 436fr) minmax(0, 435fr) 73px;
  gap: 3px;
  min-height: 0;
`;

const UpperRow = styled.div`
  display: grid;
  grid-template-columns: minmax(0, 573fr) minmax(0, 810fr);
  gap: 3px;
  min-height: 0;
`;

const RightSide = styled.div`
  display: grid;
  grid-template-rows: minmax(0, 269fr) minmax(0, 678fr);
  gap: 3px;
  min-height: 0;
`;

const Area = styled.section`
  position: relative;
  display: flex;
  flex-direction: column;
  min-width: 0;
  min-height: 0;
  border-radius: 6px;
  overflow: ${(p) => (p.$tone === "node" ? "visible" : "hidden")};
  background: ${(p) => areaTones[p.$tone || "base"]};
`;

const Header = styled.div`
  display: flex;
  align-items: center;
  flex: none;
  gap: 6px;
  height: 25px;
  padding: 0 7px 0 8px;
  border-radius: 6px 6px 0 0;
  background: ${(p) => headerTones[p.$tone || "base"]};
`;

const HeaderGroup = styled.div`
  display: flex;
  align-items: center;
  flex: none;
  gap: 6px;
`;

const HeaderSide = styled.div`
  display: flex;
  align-items: center;
  flex: 1;
  gap: 5px;
  justify-content: ${(p) => (p.$end ? "flex-end" : "flex-start")};
`;

const HeaderMiddle = styled(HeaderGroup)`
  margin-right: 18px;
`;

const ObjectLabel = styled.span`
  display: flex;
  align-items: center;
  gap: 8px;
  margin-left: 2px;
  text-shadow: 0 1px 1px #000;

  svg:last-child {
    margin-left: 8px;
  }
`;

const SideTab = styled.button`
  position: absolute;
  top: ${(p) => p.$top}px;
  ${(p) => p.$side}: 0;
  display: flex;
  align-items: center;
  justify-content: center;
  width: 7px;
  height: 14px;
  background: rgba(36, 36, 36, 0.8);
  border-radius: ${(p) => (p.$side === "left" ? "0 4px 4px 0" : "4px 0 0 4px")};
  color: #b0b0b0;
`;

const SheetBody = styled.div`
  display: flex;
  flex: 1;
  gap: 7px;
  min-height: 0;
  padding-left: 8px;
`;

const DomainPanel = styled.div`
  flex: none;
  align-self: flex-start;
  width: 143px;
  margin-top: 8px;
  padding: 4px;
  border: 1px solid #3d3d3d;
  border-radius: 4px;
  background: #282828;
`;

const Domain = styled.button`
  display: flex;
  align-items: center;
  gap: 8px;
  width: 100%;
  height: 18px;
  margin: 2px 0;
  padding: 0 6px 0 ${(p) => (p.$child ? 21 : 1)}px;
  border-radius: 2px;
  text-align: left;
  white-space: nowrap;
  background: ${(p) => (p.$active ? "#4772b3" : "none")};

  & + & {
    margin-top: 4px;
  }

  svg {
    color: #cfcfcf;
  }
`;

const DomainName = styled.span`
  flex: 1;
  width: 0;
  color: #d0d0d0;
  text-shadow: 0 1px 1px #000;
`;

const Count = styled.span`
  color: ${(p) => (p.$active ? "#b4c4de" : "#858585")};
`;

const SheetMain = styled.div`
  display: flex;
  flex-direction: column;
  flex: 1;
  min-width: 0;
`;

const TableBox = styled.div`
  flex: 1;
  min-height: 0;
  overflow: hidden;
`;

const Table = styled.table`
  width: 100%;
  table-layout: fixed;
  border-collapse: separate;
  border-spacing: 0;

  tr {
    height: 20px;
    background: #282828;
  }

  tbody tr:nth-child(even) {
    background: #2b2b2b;
  }

  th,
  td {
    padding: 0 5px 0 0;
    text-align: right;
    font-weight: 400;
    color: #d0d0d0;
  }

  th:first-child,
  td:nth-child(4),
  thead th:nth-child(2) {
    border-right: 1px solid #191919;
  }

  tbody th {
    padding-right: 3px;
    background: rgba(255, 255, 255, 0.05);
  }

  thead th {
    height: 22px;
    padding: 0 4px 0 0;
    text-align: center;
    background: #323232;
    border-bottom: 1px solid #191919;
  }
`;

const SheetFooter = styled.div`
  display: flex;
  align-items: center;
  justify-content: flex-end;
  flex: none;
  gap: 10px;
  height: 25px;
  padding: 2px 8px 0 0;
`;

const SceneSvg = styled.svg`
  position: absolute;
  inset: 0;
  width: 100%;
  height: 100%;
`;

const ViewHeader = styled.div`
  position: relative;
  display: flex;
  align-items: center;
  flex: none;
  gap: 15px;
  height: 25px;
  padding-left: 7px;
  background: rgba(48, 48, 48, 0.7);
`;

const ToolSettings = styled.div`
  position: relative;
  display: flex;
  justify-content: space-between;
  flex: none;
  height: 25px;
`;

const SettingsPatch = styled.div`
  display: flex;
  align-items: center;
  padding: 0 7px;
  background: rgba(48, 48, 48, 0.7);
  border-radius: 0 0 6px 6px;
`;

const OptionsButton = styled.button`
  ${control}
  gap: 1px;
  padding: 0 1px 0 7px;
  text-shadow: 0 1px 1px #000;
`;

const ViewBody = styled.div`
  position: relative;
  display: flex;
  align-items: flex-start;
  flex: 1;
  min-height: 0;
  padding: 9px 8px;
`;

const ToolShelf = styled.div`
  display: flex;
  flex-direction: column;
  gap: 6px;
`;

const ToolGroup = styled.div`
  display: flex;
  flex-direction: column;
  gap: 1px;
  border-radius: 4px;
  overflow: hidden;
  background: #3a3a3a;
`;

const ToolButton = styled.button`
  position: relative;
  display: grid;
  place-items: center;
  width: 38px;
  height: 34px;
  background: ${(p) => (p.$active ? "#4772b3" : "#282828")};

  &::after {
    content: "";
    position: absolute;
    right: 2px;
    bottom: 2px;
    border-right: 4px solid ${(p) => (p.$corner ? "#aaaaaa" : "transparent")};
    border-top: 4px solid transparent;
  }
`;

const ViewText = styled.div`
  display: flex;
  flex-direction: column;
  flex: 1;
  gap: 3px;
  padding-left: 18px;
  font-weight: 600;
  color: #ffffff;
  text-shadow: 0 1px 2px #000;
`;

const Navigation = styled.div`
  display: flex;
  flex-direction: column;
  align-items: flex-end;
  gap: 3px;
  padding-top: 4px;
`;

const AxisText = styled.text`
  font: 700 11px Inter, sans-serif;
  text-anchor: middle;
  fill: #1a2430;
`;

const NavButton = styled.button`
  display: grid;
  place-items: center;
  width: 27px;
  height: 27px;
  border-radius: 50%;
  background: rgba(38, 38, 38, 0.7);
`;

const NewTree = styled.div`
  display: flex;
  align-items: center;
  flex: none;

  > svg {
    margin-left: 8px;
  }
`;

const NewButton = styled.button`
  position: relative;
  display: flex;
  align-items: center;
  flex: none;
  width: 123px;
  height: 24px;
  margin-left: -6px;
  padding: 0 7px;
  background: #666666;
  box-shadow: inset 0 0 0 2px #232323;

  > span:nth-child(2) {
    flex: 1;
    padding-right: 4px;
    text-align: center;
    text-shadow: 0 1px 1px #000;
  }
`;

const NodeCanvas = styled.div`
  position: relative;
  flex: 1;
  margin-left: 5px;
  background-image:
    radial-gradient(circle, #2b2b2b 1px, transparent 1px),
    radial-gradient(circle, #202020 1px, transparent 1px);
  background-size: 84px 84px, 17px 17px;
  background-position: -26px -4px, 0 -4px;
`;

const VerticalBar = styled.div`
  position: absolute;
  top: 9px;
  right: 1px;
  bottom: 15px;
  width: 3px;
  border-radius: 2px;
  background: #303030;
`;

const HorizontalBar = styled.div`
  position: absolute;
  left: 3px;
  right: 9px;
  bottom: 2px;
  height: 3px;
  border-radius: 2px;
  background: #303030;
`;

const PopoverButton = styled.button`
  display: flex;
  align-items: center;
  gap: 2px;
  padding: 0 0 0 6px;
  background: #282828;
  text-shadow: 0 1px 1px #000;
`;

const NumberBox = styled.div`
  display: flex;
  align-items: center;
  width: ${(p) => p.$width}px;
  height: 19px;
  padding: 0 ${(p) => (p.$center ? 0 : 14)}px;
  border-radius: 4px;
  background: #545454;

  input {
    text-align: ${(p) => (p.$center ? "center" : "right")};
  }
`;

const Ruler = styled.div`
  position: relative;
  display: flex;
  flex: 1;
  min-height: 0;
  padding: 0 26px 0 19px;
  background: linear-gradient(#1d1d1d 23px, #222222 23px);
`;

const Tick = styled.div`
  display: flex;
  flex-direction: column;
  flex: 1;
  width: 0;
`;

const TickLabel = styled.span`
  display: grid;
  place-items: center;
  flex: none;
  height: 23px;
  color: #a0a0a0;
`;

const TickTrack = styled.div`
  flex: 1;
  border-left: 1px solid #272727;
  background:
    linear-gradient(#191919, #191919) 50% 0 / ${(p) => (p.$first ? 0 : 1)}px 100% no-repeat,
    ${(p) =>
      p.$first
        ? "linear-gradient(90deg, #222222 60%, #303030 60%)"
        : p.$last
          ? "linear-gradient(90deg, #303030 50%, #222222 50%)"
          : "#303030"};
`;

const Playhead = styled.div`
  position: absolute;
  top: 3px;
  bottom: 0;
  left: 38px;
  width: 24px;
  background: linear-gradient(#4772b3, #4772b3) center / 2px 100% no-repeat;
`;

const PlayheadLabel = styled.div`
  height: 18px;
  border-radius: 4px;
  line-height: 18px;
  text-align: center;
  color: #ffffff;
  background: #4772b3;
`;

const RangeBar = styled.div`
  position: absolute;
  left: 8px;
  right: 8px;
  bottom: 3px;
  height: 8px;
  border: 1px solid #545454;
  border-radius: 4px;
  background: linear-gradient(#545454, #545454) center / calc(100% - 12px) 100% no-repeat #2a2a2a;
`;

const Tree = styled.div`
  flex: 1;
  min-height: 0;
  padding-top: 2px;
  background: repeating-linear-gradient(#282828 0 20px, #2b2b2b 20px 40px) 0 2px;
`;

const TreeRow = styled.div`
  display: flex;
  align-items: center;
  height: 20px;
  padding: 0 10px 0 ${(p) => [20, 23, 43][p.$level]}px;
  color: #b8b8b8;
  background: ${(p) => (p.$active ? "#334d80" : "none")};
`;

const Branch = styled.div`
  background: linear-gradient(#555555, #555555) 29px 50% / 1px 50px no-repeat;
`;

const Arrow = styled.span`
  width: 14px;
  margin-right: 3px;
  font: 9px/16px "DejaVu Sans", sans-serif;
  text-align: center;
`;

const IconCell = styled.span`
  display: grid;
  place-items: center;
  flex: none;
  width: 20px;
  height: 18px;
  margin-right: 4px;
  border-radius: 4px;
  color: #dddddd;
  background: ${(p) => (p.$boxed ? "rgba(255, 255, 255, 0.22)" : "none")};
`;

const ObjectName = styled.span`
  margin-right: 20px;
  color: ${(p) => (p.$active ? "#f3a43b" : "inherit")};
`;

const RowButton = styled.button`
  display: grid;
  place-items: center;
  width: 20px;
  height: 20px;
`;

const Check = styled.input`
  appearance: none;
  width: 11px;
  height: 11px;
  margin: 0 5px;
  border-radius: 1px;
  background: #e6e6e6;

  &:checked::after {
    content: "";
    display: block;
    width: 3px;
    height: 6px;
    margin: 1px 3px;
    border: solid #222222;
    border-width: 0 2px 2px 0;
    transform: rotate(40deg);
  }
`;

const PropertyBody = styled.div`
  display: flex;
  flex: 1;
  min-height: 0;
`;

const PropertyTabs = styled.nav`
  display: flex;
  flex-direction: column;
  flex: none;
  gap: 7px;
  width: 28px;
  padding: 7px 0 0 2px;
  background: #1d1d1d;
`;

const PropertyGroup = styled.div`
  display: flex;
  flex-direction: column;
  border-bottom: 1px solid #181818;
`;

const PropertyTab = styled.button`
  display: grid;
  place-items: center;
  height: 28px;
  border: solid #1d1d1d;
  border-width: 1px 0;
  border-radius: 5px 0 0 5px;
  background: ${(p) => (p.$active ? "#303030" : "none")};
`;

const PropertyPanel = styled.div`
  flex: 1;
  padding: 9px 8px;
`;

const PropertyTitle = styled.div`
  display: flex;
  align-items: center;
  gap: 8px;
  height: 18px;
  padding-left: 2px;
`;

const AddModifier = styled.button`
  display: flex;
  align-items: center;
  width: 100%;
  height: 20px;
  margin-top: 17px;
  padding: 0 4px;
  border-radius: 4px;
  background: #545454;
  text-shadow: 0 1px 1px #000;

  span {
    flex: 1;
    text-align: center;
  }
`;

const StatusBar = styled.footer`
  display: flex;
  align-items: center;
  flex: none;
  height: 20px;
  padding: 0 12px;
  color: #989898;
`;

const Hint = styled.span`
  display: flex;
  align-items: center;
  flex: none;
  gap: 10px;
  width: 211px;
`;

const Stats = styled.span`
  flex: 1;
  text-align: right;
  white-space: nowrap;
`;

export default App;
